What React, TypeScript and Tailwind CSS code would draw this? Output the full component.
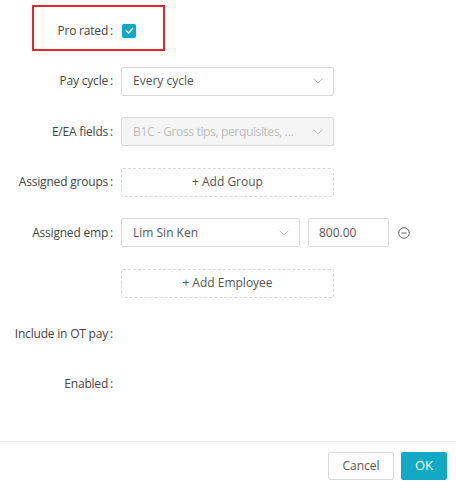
import { ReactNode } from "react";

function Chevron({ color = "#bfbfbf" }: { color?: string }) {
  return (
    <svg width="10" height="6" viewBox="0 0 10 6" fill="none">
      <path d="M0.5 0.5 L5 5 L9.5 0.5" stroke={color} strokeWidth="1" />
    </svg>
  );
}

function Row({ label, children }: { label: string; children?: ReactNode }) {
  return (
    <div className="flex h-7 items-center">
      <div className="flex w-[121px] shrink-0 justify-end pr-[8px] text-[12px] tracking-[-0.2px] text-[#444]">
        <span>{label}</span>
        <span className="ml-[2px]">:</span>
      </div>
      {children}
    </div>
  );
}

export default function App() {
  return (
    <div
      className="relative h-[483px] w-[456px] bg-white"
      style={{ fontFamily: '"Open Sans", "Noto Sans", sans-serif' }}
    >
      <div className="flex h-[441px] flex-col gap-[22.5px] pt-[16.5px]">
        <Row label="Pro rated">
          <div className="flex h-[16px] w-[16px] items-center justify-center rounded-[3px] bg-[#e6f6f9]">
            <div className="flex h-[14px] w-[14px] items-center justify-center rounded-[2px] bg-[#13a8c3]">
              <svg width="9" height="7" viewBox="0 0 9 7" fill="none">
                <path d="M1 3.5 L3.5 6 L8 1" stroke="white" strokeWidth="1.3" />
              </svg>
            </div>
          </div>
        </Row>

        <Row label="Pay cycle">
          <div className="flex h-[29px] w-[213px] items-center justify-between rounded-[2px] border border-[#d9d9d9] pl-[11px] pr-[10px] text-[12px] text-[#555]">
            <span>Every cycle</span>
            <Chevron />
          </div>
        </Row>

        <Row label="E/EA fields">
          <div className="flex h-[29px] w-[213px] items-center justify-between rounded-[2px] border border-[#d9d9d9] bg-[#f5f5f5] pl-[11px] pr-[10px] text-[12px] text-[#bbb]">
            <span className="whitespace-nowrap tracking-[-0.35px]">B1C - Gross tips, perquisites, ...</span>
            <span className="shrink-0">
              <Chevron />
            </span>
          </div>
        </Row>

        <Row label="Assigned groups">
          <div className="flex h-[29px] w-[213px] items-center justify-center rounded-[2px] border border-dashed border-[#d9d9d9] text-[12px] text-[#555]">
            + Add Group
          </div>
        </Row>

        <Row label="Assigned emp">
          <div className="flex h-[29px] w-[179px] items-center justify-between rounded-[2px] border border-[#d9d9d9] pl-[11px] pr-[10px] text-[12px] text-[#555]">
            <span>Lim Sin Ken</span>
            <Chevron />
          </div>
          <div className="ml-[8px] flex h-[29px] w-[81px] items-center rounded-[2px] border border-[#d9d9d9] pl-[10px] text-[12px] text-[#555]">
            800.00
          </div>
          <svg className="ml-[9px]" width="12" height="12" viewBox="0 0 12 12" fill="none">
            <circle cx="6" cy="6" r="5.3" stroke="#666" strokeWidth="1" />
            <path d="M3.5 6 H8.5" stroke="#666" strokeWidth="1" />
          </svg>
        </Row>

        <div className="flex h-7 items-center pl-[121px]">
          <div className="flex h-[29px] w-[213px] items-center justify-center rounded-[2px] border border-dashed border-[#d9d9d9] text-[12px] text-[#555]">
            + Add Employee
          </div>
        </div>

        <Row label="Include in OT pay" />
        <Row label="Enabled" />
      </div>

      <div className="flex justify-end gap-[7px] border-t border-[#e8e8e8] pr-[9px] pt-[10px]">
        <button className="h-[28px] w-[66px] rounded-[2px] border border-[#d9d9d9] bg-white text-[12px] text-[#555]">
          Cancel
        </button>
        <button className="h-[28px] w-[46px] rounded-[2px] bg-[#11a9c4] text-[13px] text-white">
          OK
        </button>
      </div>

      <div className="absolute left-[32px] top-[5px] h-[46px] w-[133px] border-2 border-[#e5262e]" />
    </div>
  );
}
